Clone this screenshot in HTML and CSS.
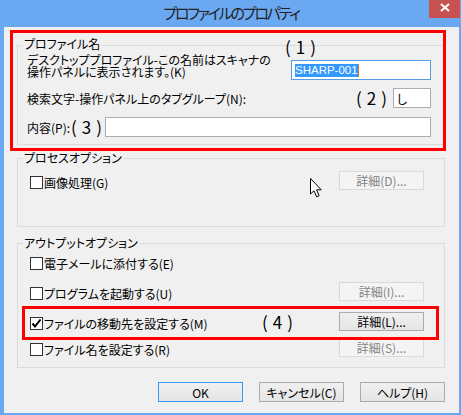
FILE: index.html
```html
<!DOCTYPE html>
<html lang="ja">
<head>
<meta charset="utf-8">
<title>プロファイルのプロパティ</title>
<link rel="stylesheet" href="styles.css">
</head>
<body>
<div class="window">
  <div class="titlebar">
    <div></div>
    <div class="title">プロファイルのプロパティ</div>
    <div class="close">
      <svg width="31" height="18" viewBox="0 0 31 18"><path d="M12 4 L20 11 M20 4 L12 11" stroke="#fff" stroke-width="2" fill="none"/></svg>
    </div>
  </div>
  <div class="client">
    <div class="group g1">
      <div class="legend">プロファイル名</div>
      <div class="row r1">
        <div class="lbl2">
          <div class="ln">デスクトッププロファイル-この名前はスキャナの</div>
          <div class="ln">操作パネルに表示されます。(K)</div>
        </div>
        <div class="input focus w1"><span class="sel">SHARP-001</span><span class="caret"></span></div>
      </div>
      <div class="row r2">
        <span class="lbl">検索文字-操作パネル上のタブグループ(N):</span>
        <span class="note n2">(2)</span>
        <div class="input w2">し</div>
      </div>
      <div class="row r3">
        <span class="lbl">内容(P):</span>
        <span class="note n3">(3)</span>
        <div class="input w3"></div>
      </div>
    </div>

    <div class="group g2">
      <div class="legend">プロセスオプション</div>
      <div class="row crow first2">
        <label class="check"><span class="box"></span><span>画像処理(G)</span></label>
        <button class="btn disabled">詳細(D)...</button>
      </div>
    </div>

    <div class="group g3">
      <div class="legend">アウトプットオプション</div>
      <div class="row crow ra">
        <label class="check"><span class="box"></span><span>電子メールに添付する(E)</span></label>
      </div>
      <div class="row crow rb">
        <label class="check"><span class="box"></span><span>プログラムを起動する(U)</span></label>
        <button class="btn disabled">詳細(I)...</button>
      </div>
      <div class="row crow rc">
        <label class="check"><span class="box checked"><svg width="11" height="11" viewBox="0 0 11 11"><path d="M1.5 5.5 L4 8.5 L9.5 1.5" stroke="#000" stroke-width="2" fill="none"/></svg></span><span>ファイルの移動先を設定する(M)</span></label>
        <span class="note n4">(4)</span>
        <button class="btn">詳細(L)...</button>
      </div>
      <div class="row crow rd">
        <label class="check"><span class="box"></span><span>ファイル名を設定する(R)</span></label>
        <button class="btn disabled">詳細(S)...</button>
      </div>
    </div>

    <div class="buttons">
      <button class="btn default">OK</button>
      <button class="btn">キャンセル(C)</button>
      <button class="btn">ヘルプ(H)</button>
    </div>
  </div>

  <span class="note n1">(1)</span>
  <div class="redbox rb1"></div>
  <div class="redbox rb2"></div>
  <svg class="cursor" width="13" height="20" viewBox="0 0 13 20"><path d="M0.5 0.5 L0.5 16 L4 12.8 L6.6 18.8 L9.1 17.7 L6.6 11.8 L11.2 11.8 Z" fill="#fff" stroke="#000" stroke-width="1"/></svg>
</div>
</body>
</html>
```
FILE: styles.css
```css
* { box-sizing: border-box; }
html, body { margin: 0; padding: 0; }
body {
  font-family: "Noto Sans CJK JP", "Noto Sans", sans-serif;
  font-size: 12px;
  color: #000;
  font-feature-settings: "palt" 1;
}
.window {
  position: relative;
  width: 461px;
  height: 415px;
  background: #6aa8f1;
  overflow: hidden;
}
.titlebar {
  height: 27px;
  display: grid;
  grid-template-columns: 1fr auto 1fr;
}
.title {
  font-size: 15px;
  line-height: 25px;
  letter-spacing: -2.2px;
  color: #222;
  white-space: nowrap;
  padding-left: 1px;
}
.close {
  justify-self: end;
  width: 31px;
  height: 18px;
  margin-right: 1px;
  background: #c75050;
}
.close svg { display: block; }
.client {
  margin: 0 2px 0 4px;
  height: 386px;
  background: #f0f0f0;
  padding-top: 18px;
}
.group {
  --pl: 9px;
  border: 1px solid #dcdcdc;
  margin: 0 14px 0 13px;
  padding-left: var(--pl);
}
.legend {
  width: max-content;
  margin: -9px 0 0 calc(5px - var(--pl));
  padding: 0 1px;
  height: 16px;
  line-height: 16px;
  background: #f0f0f0;
}
.g1 .legend { margin-top: -10px; }
.row { display: flex; align-items: center; }
.g1 { padding-right: 13px; padding-bottom: 7px; }
.r1 { align-items: flex-start; margin-top: 2px; }
.lbl2 { white-space: nowrap; }
.ln { height: 12px; line-height: 12px; }
.lbl { white-space: nowrap; }
.input {
  height: 20px;
  background: #fff;
  border: 1px solid #abadb3;
  display: flex;
  align-items: center;
  padding-left: 3px;
}
.input.focus { border-color: #569de5; }
.w1 { width: 140px; margin-left: auto; margin-top: 6px; }
.sel {
  background: #3399ff;
  color: #fff;
  font-family: "Liberation Sans", sans-serif;
  font-size: 11.5px;
  line-height: 13px;
  font-feature-settings: normal;
}
.caret { width: 1px; height: 13px; background: #e07020; }
.r2 { margin-top: 8px; height: 20px; }
.n2 { margin-left: auto; }
.w2 { width: 38px; margin-left: 6px; }
.r3 { margin-top: 9px; height: 20px; }
.n3 { margin-left: 1px; }
.w3 { flex: 1; margin-left: 3px; }
.note {
  font-size: 17px;
  line-height: 16px;
  letter-spacing: 5px;
  margin-right: -5px;
  font-feature-settings: normal;
  white-space: nowrap;
}
.n1 { position: absolute; left: 285px; top: 39px; }

.g2 { --pl: 12px; margin-top: 13px; padding-right: 20px; padding-bottom: 36px; }
.g3 { --pl: 12px; margin-top: 16px; padding-right: 20px; padding-bottom: 10px; }
.crow { height: 19px; justify-content: space-between; }
.first2 { margin-top: 5px; }
.ra { margin-top: 1px; }
.rb { margin-top: 11px; }
.rc { margin-top: 11px; }
.rd { margin-top: 7px; }
.check { display: flex; align-items: center; gap: 1px; padding-top: 3px; white-space: nowrap; }
.box {
  width: 13px;
  height: 13px;
  border: 1px solid #333;
  background: #fff;
  display: flex;
  align-items: center;
  justify-content: center;
}
.box svg { display: block; }
.n4 { margin-left: auto; margin-right: 41px; }
.btn {
  width: 85px;
  height: 19px;
  padding: 0;
  font-family: inherit;
  font-size: 12px;
  font-feature-settings: "palt" 1;
  line-height: 17px;
  color: #000;
  background: linear-gradient(#f0f0f0, #e5e5e5);
  border: 1px solid #acacac;
  border-radius: 0;
}
.btn.disabled {
  background: #f4f4f4;
  border-color: #d9d9d9;
  color: #838383;
}
.btn.default { border-color: #3399ff; }
.buttons {
  display: flex;
  justify-content: flex-end;
  gap: 16px;
  margin: 14px 14px 0 0;
}
.buttons .btn { height: 20px; }

.redbox { position: absolute; border: 3px solid #ff0000; }
.rb1 { left: 10px; top: 30px; width: 436px; height: 121px; }
.rb2 { left: 22px; top: 306px; width: 417px; height: 34px; }
.cursor { position: absolute; left: 310px; top: 178px; }
```
